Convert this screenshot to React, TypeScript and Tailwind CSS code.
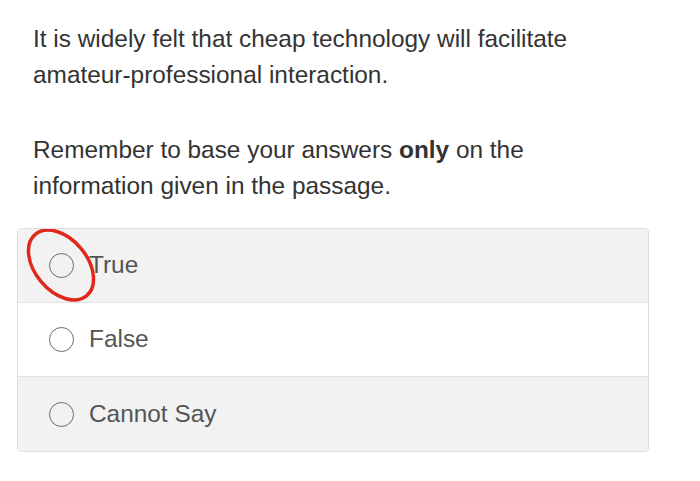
const options = [
  { label: "True", shaded: true, marked: true },
  { label: "False", shaded: false },
  { label: "Cannot Say", shaded: true },
];

function RadioRow({ label, shaded, marked }: { label: string; shaded: boolean; marked?: boolean }) {
  return (
    <label
      className={`relative flex h-[74px] items-center gap-[15px] pl-[31px] ${
        shaded ? "bg-[#f2f2f2]" : "bg-white"
      }`}
    >
      <span className="block h-[25px] w-[25px] rounded-full border-[1.5px] border-[#6b6b6b] bg-transparent" />
      <span className="text-[24.4px] leading-none text-[#555]">{label}</span>
      {marked && (
        // hand-drawn red circle around the first option
        <svg
          className="pointer-events-none absolute left-[0px] top-[-4px]"
          width="100"
          height="84"
          viewBox="0 0 100 84"
        >
          <ellipse
            cx="43"
            cy="40"
            rx="40"
            ry="26"
            transform="rotate(50 43 40)"
            fill="none"
            stroke="#e0291d"
            strokeWidth="3.5"
          />
        </svg>
      )}
    </label>
  );
}

export default function App() {
  return (
    <div className="min-h-[481px] w-[700px] bg-white font-['Liberation_Sans',Arial,sans-serif] text-[#333]">
      <div className="px-[33px] pt-[21px] text-[24.4px] leading-[36px]">
        <p>
          It is widely felt that cheap technology will facilitate
          <br />
          amateur-professional interaction.
        </p>
        <p className="mt-[39px]">
          Remember to base your answers <strong className="font-bold">only</strong> on the
          <br />
          information given in the passage.
        </p>
      </div>
      <div className="mx-[17px] mt-[24px] w-[632px] overflow-hidden rounded-[4px] border border-[#dcdcdc] divide-y divide-[#e2e2e2]">
        {options.map((o) => (
          <RadioRow key={o.label} {...o} />
        ))}
      </div>
    </div>
  );
}
